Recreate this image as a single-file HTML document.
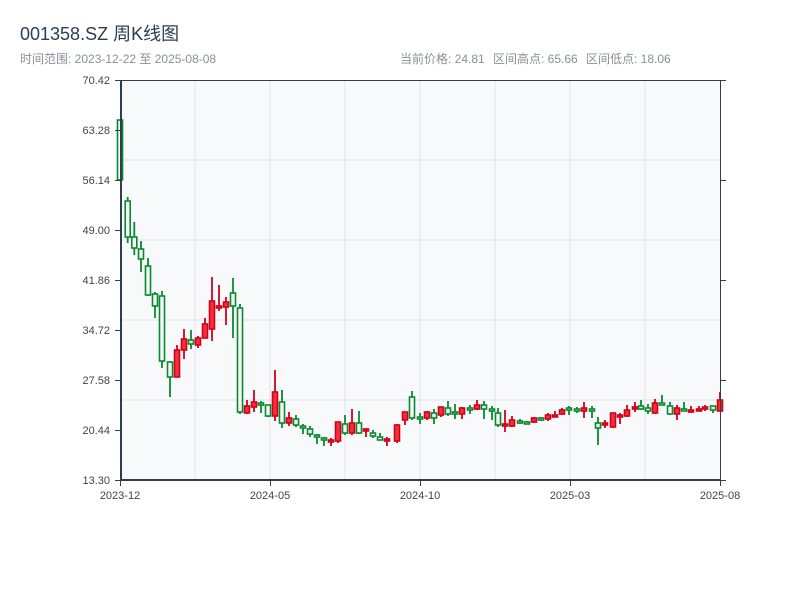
<!DOCTYPE html>
<html><head><meta charset="utf-8">
<style>
html,body{margin:0;padding:0;background:#fff;width:800px;height:600px;overflow:hidden}
svg{display:block}
text{font-family:"Liberation Sans","Noto Sans CJK SC",sans-serif}
</style></head><body>
<svg id="s" width="800" height="600" xmlns="http://www.w3.org/2000/svg">
<text x="20" y="40" font-size="18" fill="#2c3e50">001358.SZ 周K线图</text>
<text x="20" y="63" font-size="12" fill="#8a8f96">时间范围: 2023-12-22 至 2025-08-08</text>
<text x="400" y="63" font-size="12" fill="#8a8f96">当前价格: 24.81</text>
<text x="493" y="63" font-size="12" fill="#8a8f96">区间高点: 65.66</text>
<text x="586" y="63" font-size="12" fill="#8a8f96">区间低点: 18.06</text>
<rect x="120" y="80" width="600" height="400" fill="#f7f9fb"/>
<g stroke="#e1e4e8" stroke-width="1">
<line x1="195" y1="80" x2="195" y2="480"/><line x1="270" y1="80" x2="270" y2="480"/><line x1="345" y1="80" x2="345" y2="480"/><line x1="420" y1="80" x2="420" y2="480"/><line x1="495" y1="80" x2="495" y2="480"/><line x1="570" y1="80" x2="570" y2="480"/><line x1="645" y1="80" x2="645" y2="480"/>
<line x1="120" y1="160" x2="720" y2="160"/><line x1="120" y1="240" x2="720" y2="240"/><line x1="120" y1="320" x2="720" y2="320"/><line x1="120" y1="400" x2="720" y2="400"/>
</g>
<g id="c"></g>
<g stroke="#2c3e50">
<line x1="120" y1="80.5" x2="720" y2="80.5" stroke-width="1"/>
<line x1="720.5" y1="80" x2="720.5" y2="480" stroke-width="1"/>
<line x1="121" y1="80" x2="121" y2="481" stroke-width="2"/>
<line x1="120" y1="480" x2="721" y2="480" stroke-width="2"/>
<g stroke-width="1">
<line x1="115" y1="80.5" x2="120" y2="80.5"/><line x1="115" y1="130.5" x2="120" y2="130.5"/><line x1="115" y1="180.5" x2="120" y2="180.5"/><line x1="115" y1="230.5" x2="120" y2="230.5"/><line x1="115" y1="280.5" x2="120" y2="280.5"/><line x1="115" y1="330.5" x2="120" y2="330.5"/><line x1="115" y1="380.5" x2="120" y2="380.5"/><line x1="115" y1="430.5" x2="120" y2="430.5"/><line x1="115" y1="480.5" x2="120" y2="480.5"/>
<line x1="720" y1="80.5" x2="726" y2="80.5"/><line x1="720" y1="180.5" x2="726" y2="180.5"/><line x1="720" y1="280.5" x2="726" y2="280.5"/><line x1="720" y1="380.5" x2="726" y2="380.5"/><line x1="720" y1="480.5" x2="726" y2="480.5"/>
<line x1="120.5" y1="480" x2="120.5" y2="486"/><line x1="270.5" y1="480" x2="270.5" y2="486"/><line x1="420.5" y1="480" x2="420.5" y2="486"/><line x1="570.5" y1="480" x2="570.5" y2="486"/><line x1="720.5" y1="480" x2="720.5" y2="486"/>
</g></g>
<g font-size="11" fill="#444" text-anchor="end">
<text x="110" y="84">70.42</text><text x="110" y="134">63.28</text><text x="110" y="184">56.14</text><text x="110" y="234">49.00</text><text x="110" y="284">41.86</text><text x="110" y="334">34.72</text><text x="110" y="384">27.58</text><text x="110" y="434">20.44</text><text x="110" y="484">13.30</text>
</g>
<g font-size="11" fill="#444" text-anchor="middle">
<text x="120" y="499">2023-12</text><text x="270" y="499">2024-05</text><text x="420" y="499">2024-10</text><text x="570" y="499">2025-03</text><text x="720" y="499">2025-08</text>
</g>
</svg>
<script>
var d=[
[120,'g',120,180,120,180],[127.7,'g',201,237,197,243],[134.3,'g',237,248,222,255],[141,'g',249,259,241,272],[148,'g',266,295,258,296],[155,'g',294,306,292,318],[162,'g',296,361,291,368],[170,'g',362,377,361,397],[177,'r',350,377,345,377],[184,'r',339,350,329,359],[191,'g',340,344,330,349],[198,'r',338,345,336,348],[205,'r',324,338,318,338],[212,'r',301,329,277,341],[219,'r',306,308,285,311],[226,'r',302,307,297,325],[233,'g',293,306,278,338],[240,'g',308,412,304,414],[247,'r',406,413,400,414],[254,'r',402,407,390,412],[261,'g',403,405,401,413],[268,'g',405,416,405,417],[275,'r',392,416,370,421],[282,'g',402,423,390,428],[289,'r',418,423,412,426],[296,'g',419,425,415,427],[303,'g',426,428,424,434],[310,'g',429,434,426,437],[317,'g',435,437,434,444],[324,'g',438,440,437,446],[331,'r',440,442,438,446],[338,'r',422,441,422,443],[345,'g',424,433,415,435],[352,'r',423,433,409,435],[359,'g',423,433,411,434],[366,'r',429,431,428,437],[373,'g',433,436,430,438],[380,'g',437,440,433,440],[387,'r',439,441,437,446],[397,'r',425,441,424,443],[405,'r',412,420,412,425],[412,'g',397,418,391,420],[420,'g',417,419,413,424],[427,'r',412,418,411,420],[434,'g',413,418,409,424],[441,'r',407,415,407,417],[448,'g',408,414,401,416],[455,'g',412,414,404,419],[462,'r',408,414,407,419],[470,'g',408,410,405,414],[477,'r',405,409,400,410],[484,'g',405,409,401,419],[492,'g',409,411,406,420],[498,'g',413,425,408,427],[505,'r',424,426,410,432],[512,'r',420,426,416,427],[520,'g',421,423,419,424],[527,'g',422,424,421,424],[534,'r',418,422,417,423],[541,'g',418,420,417,421],[548,'r',415,419,413,421],[555,'r',415,417,411,417],[562,'r',410,414,408,415],[569,'g',408,410,406,415],[577,'g',409,411,407,413],[584,'r',408,411,402,418],[592,'g',409,411,406,418],[598,'g',423,428,417,445],[605,'r',423,425,420,428],[613,'r',413,427,413,428],[620,'r',415,417,413,424],[627,'r',410,416,405,417],[635,'r',407,409,402,412],[641,'g',406,409,400,410],[648,'g',408,411,404,414],[655,'r',403,413,399,414],[662,'g',403,405,395,405],[670,'g',406,414,402,415],[677,'r',408,414,405,420],[684,'g',409,411,402,411],[691,'r',410,412,406,413],[699,'r',409,411,406,411],[705,'r',407,409,405,411],[713,'g',406,410,406,413],[720,'r',400,411,392,411]];
var h='';
d.forEach(function(c){var x=c[0],r=c[1]=='r',st=r?'#d0021b':'#078a2e',fl=r?'#f5303a':'#f7f9fb';
h+='<line x1="'+x+'" y1="'+c[4]+'" x2="'+x+'" y2="'+c[5]+'" stroke="'+st+'" stroke-width="1.8"/>';
h+='<rect x="'+(x-2.5)+'" y="'+c[2]+'" width="5" height="'+Math.max(1,c[3]-c[2])+'" fill="'+fl+'" stroke="'+st+'" stroke-width="1.6"/>';});
document.getElementById('c').innerHTML=h;
</script>
</body></html>
